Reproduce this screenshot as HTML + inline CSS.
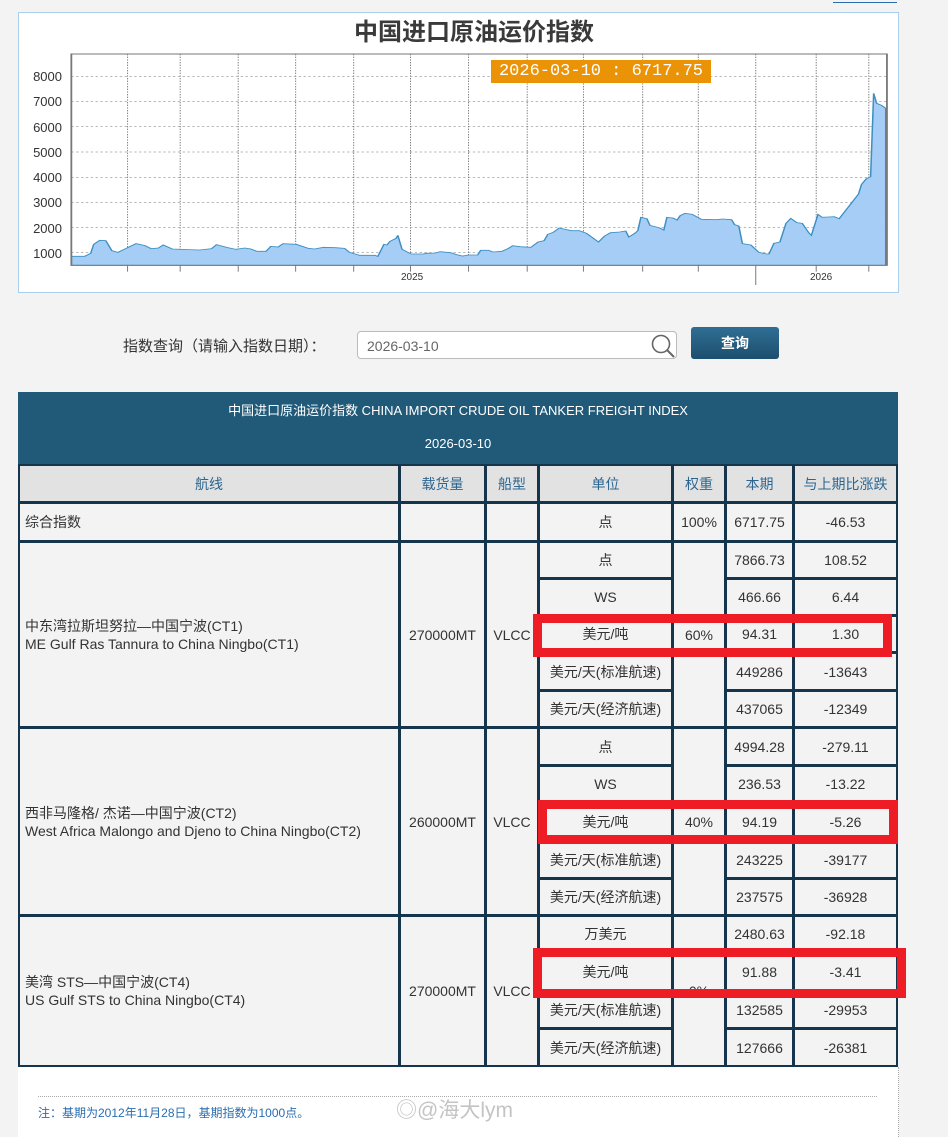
<!DOCTYPE html>
<html><head><meta charset="utf-8"><style>
*{margin:0;padding:0;box-sizing:border-box}
body{width:948px;height:1133px;background:#f3f3f3;position:relative;overflow:hidden;font-family:"Liberation Sans","Noto Sans CJK SC",sans-serif;color:#333}
.a{position:absolute}
.c{position:absolute;border:2px solid #15354d;background:#f3f3f3;display:flex;align-items:center;justify-content:center;font-size:14px;color:#333;margin-left:-1px;margin-top:-1px}
.h{background:#e2e2e2;color:#2c6690}
.l{justify-content:flex-start;padding-left:5px;line-height:18px}
.r{position:absolute;border:9px solid #ee1c25}
</style></head><body>
<div class="a" style="left:833px;top:-8px;width:64px;height:11px;border-bottom:1px solid #2a6db0"></div>
<div class="a" style="left:18px;top:12px;width:881px;height:281px;background:#fff;border:1px solid #a8cfee"></div>
<div class="a" style="left:0;top:12px;width:948px;text-align:center;font-size:24px;font-weight:bold;color:#3a3a3a">中国进口原油运价指数</div>
<svg class="a" style="left:0;top:0" width="948" height="300" viewBox="0 0 1568 900" preserveAspectRatio="none">
<g stroke="#777" stroke-dasharray="4,4" stroke-width="1.6">
<line x1="118" x2="1467" y1="229" y2="229"/><line x1="118" x2="1467" y1="304" y2="304"/><line x1="118" x2="1467" y1="380" y2="380"/><line x1="118" x2="1467" y1="456" y2="456"/><line x1="118" x2="1467" y1="532" y2="532"/><line x1="118" x2="1467" y1="607" y2="607"/><line x1="118" x2="1467" y1="683" y2="683"/><line x1="118" x2="1467" y1="758" y2="758"/>
<line x1="211" x2="211" y1="162" y2="796"/><line x1="298" x2="298" y1="162" y2="796"/><line x1="394" x2="394" y1="162" y2="796"/><line x1="489" x2="489" y1="162" y2="796"/><line x1="585" x2="585" y1="162" y2="796"/><line x1="679" x2="679" y1="162" y2="796"/><line x1="775" x2="775" y1="162" y2="796"/><line x1="872" x2="872" y1="162" y2="796"/><line x1="965" x2="965" y1="162" y2="796"/><line x1="1063" x2="1063" y1="162" y2="796"/><line x1="1155" x2="1155" y1="162" y2="796"/><line x1="1250" x2="1250" y1="162" y2="796"/><line x1="1350" x2="1350" y1="162" y2="796"/><line x1="1437" x2="1437" y1="162" y2="796"/>
</g>
<path d="M118,796 L118,769 140,769 150,760 155,733 165,721 175,722 185,752 195,757 225,731 240,737 250,746 262,744 270,735 285,747 330,750 350,746 358,734 375,742 390,748 405,744 415,747 425,754 440,754 448,739 460,741 468,731 490,733 510,745 520,747 535,742 555,743 570,745 578,757 595,766 620,766 625,769 635,733 640,735 645,724 655,715 658,706 665,748 680,762 700,762 705,760 720,759 728,755 745,758 755,764 765,768 775,765 790,765 795,751 808,751 815,756 830,754 840,746 848,737 860,740 878,742 890,726 900,722 906,703 915,697 925,684 935,688 945,692 958,692 970,700 990,726 1000,708 1010,698 1025,696 1035,693 1040,711 1050,700 1055,692 1060,652 1070,656 1075,676 1090,683 1098,690 1103,652 1113,654 1120,660 1125,647 1133,640 1145,643 1160,658 1185,659 1195,657 1210,659 1215,674 1222,678 1228,731 1242,735 1255,757 1268,762 1272,762 1280,730 1290,726 1300,670 1308,655 1318,668 1327,670 1338,699 1342,706 1353,643 1360,652 1370,651 1380,650 1388,656 1420,582 1425,553 1433,536 1440,530 1445,280 1450,310 1458,316 1465,325 L1465,796 Z" fill="#a6cdf5" stroke="#3b8fc2" stroke-width="2.5"/>
<rect x="118" y="162" width="1349" height="634" fill="none" stroke="#777" stroke-width="3"/>
<g stroke="#777" stroke-width="1.6"><line x1="211" x2="211" y1="796" y2="815"/><line x1="298" x2="298" y1="796" y2="815"/><line x1="394" x2="394" y1="796" y2="815"/><line x1="489" x2="489" y1="796" y2="815"/><line x1="585" x2="585" y1="796" y2="815"/><line x1="679" x2="679" y1="796" y2="815"/><line x1="775" x2="775" y1="796" y2="815"/><line x1="872" x2="872" y1="796" y2="815"/><line x1="965" x2="965" y1="796" y2="815"/><line x1="1063" x2="1063" y1="796" y2="815"/><line x1="1155" x2="1155" y1="796" y2="815"/><line x1="1250" x2="1250" y1="796" y2="855"/><line x1="1350" x2="1350" y1="796" y2="815"/><line x1="1437" x2="1437" y1="796" y2="815"/></g>
</svg>
<div class="a" style="left:24px;top:64px;font-size:13px;line-height:25.3px;text-align:right;width:38px;color:#333">8000<br>7000<br>6000<br>5000<br>4000<br>3000<br>2000<br>1000</div>
<div class="a" style="left:401px;top:272px;font-size:10px">2025</div>
<div class="a" style="left:810px;top:272px;font-size:10px">2026</div>
<div class="a" style="left:491px;top:60px;width:220px;height:23px;background:#ea9307;color:#fff;font-size:17px;line-height:23px;text-align:center;font-family:'Liberation Mono',monospace">2026-03-10 : 6717.75</div>

<div class="a" style="left:123px;top:335px;font-size:15px;color:#333">指数查询（请输入指数日期）：</div>
<div class="a" style="left:357px;top:331px;width:320px;height:28px;background:#fff;border:1px solid #bbb;border-radius:4px;font-size:14px;color:#666;padding:6px 9px">2026-03-10</div>
<svg class="a" style="left:649px;top:333px" width="28" height="26"><circle cx="12" cy="11" r="8.5" fill="none" stroke="#666" stroke-width="1.6"/><line x1="18" y1="17" x2="25" y2="24" stroke="#666" stroke-width="2"/></svg>
<div class="a" style="left:691px;top:327px;width:88px;height:32px;background:linear-gradient(#2f6e94,#1d4f6e);border-radius:3px;color:#fff;font-size:14px;text-align:center;line-height:32px;font-weight:bold">查询</div>

<div class="a" style="left:18px;top:392px;width:880px;height:74px;background:#215a78;color:#fff;font-size:13px;text-align:center">
<div style="margin-top:8px">中国进口原油运价指数 CHINA IMPORT CRUDE OIL TANKER FREIGHT INDEX</div>
<div style="margin-top:17px">2026-03-10</div></div>

<div class="c h" style="left:19px;top:465px;width:382px;height:39px">航线</div>
<div class="c h" style="left:400px;top:465px;width:87px;height:39px">载货量</div>
<div class="c h" style="left:486px;top:465px;width:54px;height:39px">船型</div>
<div class="c h" style="left:539px;top:465px;width:135px;height:39px">单位</div>
<div class="c h" style="left:673px;top:465px;width:54px;height:39px">权重</div>
<div class="c h" style="left:726px;top:465px;width:69px;height:39px">本期</div>
<div class="c h" style="left:794px;top:465px;width:105px;height:39px">与上期比涨跌</div>

<div class="c l" style="left:19px;top:503px;width:382px;height:40px">综合指数</div>
<div class="c" style="left:400px;top:503px;width:87px;height:40px"></div>
<div class="c" style="left:486px;top:503px;width:54px;height:40px"></div>
<div class="c" style="left:539px;top:503px;width:135px;height:40px">点</div>
<div class="c" style="left:673px;top:503px;width:54px;height:40px">100%</div>
<div class="c" style="left:726px;top:503px;width:69px;height:40px">6717.75</div>
<div class="c" style="left:794px;top:503px;width:105px;height:40px">-46.53</div>

<div class="c l" style="left:19px;top:542px;width:382px;height:187px">中东湾拉斯坦努拉—中国宁波(CT1)<br>ME Gulf Ras Tannura to China Ningbo(CT1)</div>
<div class="c" style="left:400px;top:542px;width:87px;height:187px">270000MT</div>
<div class="c" style="left:486px;top:542px;width:54px;height:187px">VLCC</div>
<div class="c" style="left:673px;top:542px;width:54px;height:187px">60%</div>
<div class="c" style="left:539px;top:542px;width:135px;height:38px">点</div><div class="c" style="left:726px;top:542px;width:69px;height:38px">7866.73</div><div class="c" style="left:794px;top:542px;width:105px;height:38px">108.52</div>
<div class="c" style="left:539px;top:579px;width:135px;height:38px">WS</div><div class="c" style="left:726px;top:579px;width:69px;height:38px">466.66</div><div class="c" style="left:794px;top:579px;width:105px;height:38px">6.44</div>
<div class="c" style="left:539px;top:616px;width:135px;height:38px">美元/吨</div><div class="c" style="left:726px;top:616px;width:69px;height:38px">94.31</div><div class="c" style="left:794px;top:616px;width:105px;height:38px">1.30</div>
<div class="c" style="left:539px;top:653px;width:135px;height:39px">美元/天(标准航速)</div><div class="c" style="left:726px;top:653px;width:69px;height:39px">449286</div><div class="c" style="left:794px;top:653px;width:105px;height:39px">-13643</div>
<div class="c" style="left:539px;top:691px;width:135px;height:38px">美元/天(经济航速)</div><div class="c" style="left:726px;top:691px;width:69px;height:38px">437065</div><div class="c" style="left:794px;top:691px;width:105px;height:38px">-12349</div>

<div class="c l" style="left:19px;top:728px;width:382px;height:189px">西非马隆格/ 杰诺—中国宁波(CT2)<br>West Africa Malongo and Djeno to China Ningbo(CT2)</div>
<div class="c" style="left:400px;top:728px;width:87px;height:189px">260000MT</div>
<div class="c" style="left:486px;top:728px;width:54px;height:189px">VLCC</div>
<div class="c" style="left:673px;top:728px;width:54px;height:189px">40%</div>
<div class="c" style="left:539px;top:728px;width:135px;height:39px">点</div><div class="c" style="left:726px;top:728px;width:69px;height:39px">4994.28</div><div class="c" style="left:794px;top:728px;width:105px;height:39px">-279.11</div>
<div class="c" style="left:539px;top:766px;width:135px;height:38px">WS</div><div class="c" style="left:726px;top:766px;width:69px;height:38px">236.53</div><div class="c" style="left:794px;top:766px;width:105px;height:38px">-13.22</div>
<div class="c" style="left:539px;top:803px;width:135px;height:39px">美元/吨</div><div class="c" style="left:726px;top:803px;width:69px;height:39px">94.19</div><div class="c" style="left:794px;top:803px;width:105px;height:39px">-5.26</div>
<div class="c" style="left:539px;top:841px;width:135px;height:39px">美元/天(标准航速)</div><div class="c" style="left:726px;top:841px;width:69px;height:39px">243225</div><div class="c" style="left:794px;top:841px;width:105px;height:39px">-39177</div>
<div class="c" style="left:539px;top:879px;width:135px;height:38px">美元/天(经济航速)</div><div class="c" style="left:726px;top:879px;width:69px;height:38px">237575</div><div class="c" style="left:794px;top:879px;width:105px;height:38px">-36928</div>

<div class="c l" style="left:19px;top:916px;width:382px;height:152px">美湾 STS—中国宁波(CT4)<br>US Gulf STS to China Ningbo(CT4)</div>
<div class="c" style="left:400px;top:916px;width:87px;height:152px">270000MT</div>
<div class="c" style="left:486px;top:916px;width:54px;height:152px">VLCC</div>
<div class="c" style="left:673px;top:916px;width:54px;height:152px">0%</div>
<div class="c" style="left:539px;top:916px;width:135px;height:38px">万美元</div><div class="c" style="left:726px;top:916px;width:69px;height:38px">2480.63</div><div class="c" style="left:794px;top:916px;width:105px;height:38px">-92.18</div>
<div class="c" style="left:539px;top:953px;width:135px;height:39px">美元/吨</div><div class="c" style="left:726px;top:953px;width:69px;height:39px">91.88</div><div class="c" style="left:794px;top:953px;width:105px;height:39px">-3.41</div>
<div class="c" style="left:539px;top:991px;width:135px;height:39px">美元/天(标准航速)</div><div class="c" style="left:726px;top:991px;width:69px;height:39px">132585</div><div class="c" style="left:794px;top:991px;width:105px;height:39px">-29953</div>
<div class="c" style="left:539px;top:1029px;width:135px;height:39px">美元/天(经济航速)</div><div class="c" style="left:726px;top:1029px;width:69px;height:39px">127666</div><div class="c" style="left:794px;top:1029px;width:105px;height:39px">-26381</div>

<div class="r" style="left:533px;top:614px;width:359px;height:43px"></div>
<div class="r" style="left:538px;top:800px;width:360px;height:44px"></div>
<div class="r" style="left:533px;top:948px;width:373px;height:50px"></div>

<div class="a" style="left:18px;top:1067px;width:881px;height:70px;background:#fff;border-right:1px dotted #aaa"></div>
<div class="a" style="left:38px;top:1096px;width:839px;border-top:1px dotted #aaa"></div>
<div class="a" style="left:38px;top:1104px;font-size:12px;color:#2a6db0">注：基期为2012年11月28日，基期指数为1000点。</div>
<div class="a" style="left:396px;top:1094px;font-size:21px;color:#c4c4c4">◎@海大lym</div>
</body></html>
